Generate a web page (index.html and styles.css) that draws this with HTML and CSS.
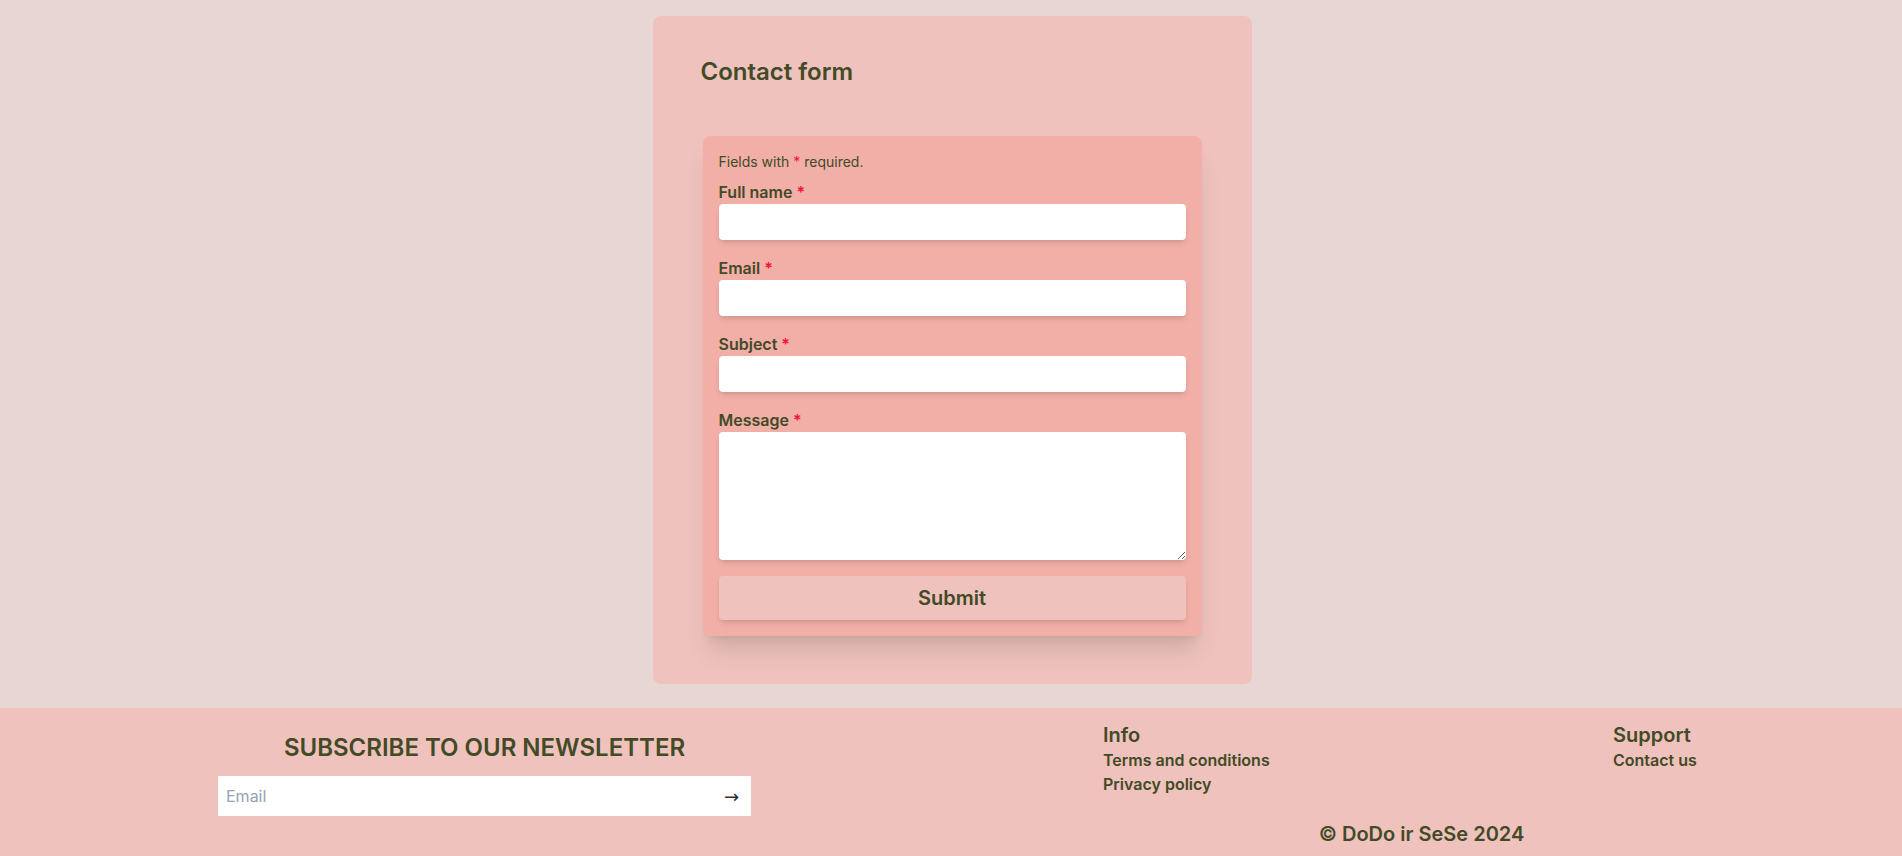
FILE: index.html
```html
<!DOCTYPE html>
<html lang="en">
<head>
<meta charset="utf-8">
<title>Contact form</title>
<link rel="stylesheet" href="styles.css">
</head>
<body>
<main class="page">
  <section class="card">
    <h1 class="card-title">Contact form</h1>
    <form class="form">
      <p class="note">Fields with <span class="req">*</span> required.</p>
      <div class="field">
        <label class="label" for="name">Full name <span class="req">*</span></label>
        <input class="input" id="name" type="text">
      </div>
      <div class="field">
        <label class="label" for="email">Email <span class="req">*</span></label>
        <input class="input" id="email" type="email">
      </div>
      <div class="field">
        <label class="label" for="subject">Subject <span class="req">*</span></label>
        <input class="input" id="subject" type="text">
      </div>
      <div class="field">
        <label class="label" for="message">Message <span class="req">*</span></label>
        <textarea class="textarea" id="message"></textarea>
      </div>
      <button class="submit" type="button">Submit</button>
    </form>
  </section>
</main>
<footer class="footer">
  <div class="news">
    <h2 class="news-title">SUBSCRIBE TO OUR NEWSLETTER</h2>
    <div class="news-box">
      <input class="news-input" type="email" placeholder="Email">
      <button class="news-btn" type="button">→</button>
    </div>
  </div>
  <div class="links">
    <div class="cols">
      <div class="col">
        <h3 class="col-title">Info</h3>
        <a class="col-link" href="#">Terms and conditions</a>
        <a class="col-link" href="#">Privacy policy</a>
      </div>
      <div class="col">
        <h3 class="col-title">Support</h3>
        <a class="col-link" href="#">Contact us</a>
      </div>
    </div>
    <p class="copy">© DoDo ir SeSe 2024</p>
  </div>
</footer>
</body>
</html>
```
FILE: styles.css
```css
* { box-sizing: border-box; }
html, body { margin: 0; padding: 0; }
body {
  background: #e8d6d5;
  font-family: Inter, "Noto Sans", sans-serif;
  color: #424a26;
}
.page {
  padding: 16px 0 24px 2px;
  display: flex;
  justify-content: center;
}
.card {
  width: 599px;
  background: #efc2bd;
  border-radius: 8px;
  padding: 40px 48px 48px;
}
.card-title {
  margin: 0 0 48px;
  font-size: 24px;
  line-height: 32px;
  font-weight: 600;
}
.form {
  margin: 0 2px;
  background: #f2afa7;
  border-radius: 8px;
  padding: 16px;
  box-shadow: 0 20px 25px -5px rgba(0,0,0,0.1), 0 8px 10px -6px rgba(0,0,0,0.1);
  display: flex;
  flex-direction: column;
}
.note {
  margin: 0 0 8px;
  font-size: 14px;
  line-height: 20px;
}
.req { color: #f5123a; }
.field {
  display: flex;
  flex-direction: column;
  margin-bottom: 16px;
}
.label {
  font-size: 16px;
  line-height: 24px;
  font-weight: 600;
}
.input, .textarea {
  border: none;
  background: #fff;
  border-radius: 4px;
  box-shadow: 0 4px 6px -1px rgba(0,0,0,0.1), 0 2px 4px -2px rgba(0,0,0,0.1);
  font-family: inherit;
  font-size: 16px;
  padding: 8px;
  outline: none;
}
.input { height: 36px; }
.textarea { height: 128px; display: block; }
.submit {
  height: 44px;
  border: none;
  border-radius: 4px;
  background: #efc2bd;
  color: #424a26;
  font-family: inherit;
  font-size: 20px;
  font-weight: 600;
  box-shadow: 0 4px 6px -1px rgba(0,0,0,0.1), 0 2px 4px -2px rgba(0,0,0,0.1);
}
.footer {
  background: #efc2bd;
  display: flex;
  min-height: 160px;
}
.news {
  width: 951px;
  padding: 24px 0 0 18px;
  display: flex;
  flex-direction: column;
  align-items: center;
}
.news-title {
  margin: 0 0 12px;
  font-size: 24px;
  line-height: 32px;
  font-weight: 600;
}
.news-box {
  width: 533px;
  height: 40px;
  background: #fff;
  display: flex;
  align-items: center;
}
.news-input {
  flex: 1;
  border: none;
  outline: none;
  height: 100%;
  padding: 0 8px;
  font-family: inherit;
  font-size: 16px;
  color: #424a26;
  background: transparent;
}
.news-input::placeholder { color: #94a3b8; }
.news-btn {
  border: none;
  background: transparent;
  font-family: "DejaVu Sans", sans-serif;
  font-size: 18px;
  color: #2a2f38;
  padding: 0 12px 0 8px;
}
.links {
  flex: 1;
  padding-top: 15px;
}
.cols {
  display: grid;
  grid-template-columns: 510px 1fr;
  padding-left: 152px;
}
.col {
  display: flex;
  flex-direction: column;
}
.col-title {
  margin: 0;
  font-size: 20px;
  line-height: 25px;
  font-weight: 600;
}
.col-link {
  font-size: 16px;
  line-height: 24px;
  font-weight: 600;
  color: #424a26;
  text-decoration: none;
}
.copy {
  margin: 24px 0 0;
  text-align: center;
  font-size: 20px;
  line-height: 28px;
  font-weight: 600;
  padding-right: 10px;
}
```
